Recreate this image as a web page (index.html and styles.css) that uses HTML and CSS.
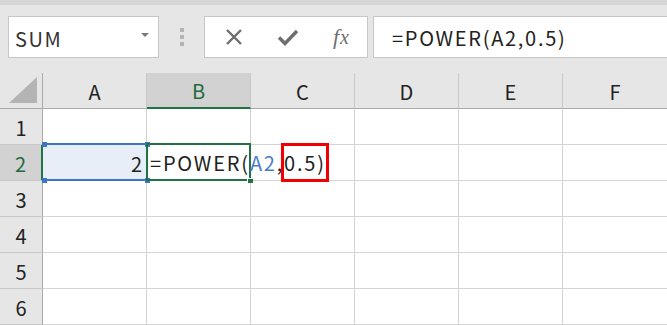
FILE: index.html
```html
<!DOCTYPE html>
<html lang="ja">
<head>
<meta charset="utf-8">
<link rel="stylesheet" href="styles.css">
</head>
<body>
<div class="app">
  <div class="topstrip"></div>
  <div class="toolbar">
    <div class="namebox">
      <span class="name">SUM</span>
      <svg class="caret" width="8" height="5" viewBox="0 0 8 5"><path d="M0 0h8L4 4z" fill="#7a7a7a"/></svg>
    </div>
    <div class="dots"><i></i><i></i><i></i></div>
    <div class="buttons">
      <svg class="ico" width="20" height="20" viewBox="0 0 20 20"><path d="M3 3L17 17M17 3L3 17" stroke="#6e6e6e" stroke-width="2.4" fill="none"/></svg>
      <svg class="ico" width="22" height="20" viewBox="0 0 22 20"><path d="M2 10.5l6 6L20 4" stroke="#6e6e6e" stroke-width="3.4" fill="none"/></svg>
      <span class="fx"><i>f</i><i>x</i></span>
    </div>
    <div class="formula">=POWER(A2,0.5)</div>
  </div>
  <div class="sheet">
    <div class="grid">
      <div class="corner"><svg width="30" height="28" viewBox="0 0 30 28"><path d="M28 0V26H0z" fill="#b4b4b4"/></svg></div>
      <div class="ch">A</div>
      <div class="ch sel">B</div>
      <div class="ch">C</div>
      <div class="ch">D</div>
      <div class="ch">E</div>
      <div class="ch last">F</div>

      <div class="rh">1</div>
      <div class="c"></div><div class="c"></div><div class="c"></div><div class="c"></div><div class="c"></div><div class="c last"></div>

      <div class="rh sel">2</div>
      <div class="c a2">2</div>
      <div class="c b2"></div><div class="c nob"></div><div class="c"></div><div class="c"></div><div class="c last"></div>

      <div class="rh">3</div>
      <div class="c"></div><div class="c"></div><div class="c"></div><div class="c"></div><div class="c"></div><div class="c last"></div>

      <div class="rh">4</div>
      <div class="c"></div><div class="c"></div><div class="c"></div><div class="c"></div><div class="c"></div><div class="c last"></div>

      <div class="rh">5</div>
      <div class="c"></div><div class="c"></div><div class="c"></div><div class="c"></div><div class="c"></div><div class="c last"></div>

      <div class="rh">6</div>
      <div class="c"></div><div class="c"></div><div class="c"></div><div class="c"></div><div class="c"></div><div class="c last"></div>
    </div>

    <div class="refbox">
      <i class="h h1"></i><i class="h h2"></i><i class="h h3"></i><i class="h h4"></i>
    </div>
    <div class="activebox"><i class="fill"></i></div>
    <div class="celltext">=POWER(<span class="ref">A2</span>,0.5)</div>
    <div class="redbox"></div>
  </div>
</div>
</body>
</html>
```

FILE: styles.css
```css
* { box-sizing: border-box; }
html, body { margin: 0; padding: 0; }
body {
  width: 667px;
  height: 325px;
  overflow: hidden;
  background: #e6e6e6;
  font-family: "Noto Sans CJK JP", "Noto Sans", sans-serif;
  color: #222;
}
.app { width: 667px; }
.topstrip { height: 5px; background: #d6d6d6; }
.toolbar {
  height: 68px;
  display: flex;
  align-items: flex-start;
  padding-top: 11px;
  padding-left: 8px;
}
.namebox {
  width: 151px;
  height: 42px;
  background: #fff;
  border: 1px solid #c6c6c6;
  display: flex;
  align-items: center;
  justify-content: space-between;
  padding: 0 9px 0 6px;
}
.name { font-size: 20px; color: #333; letter-spacing: 1.6px; margin-top: 2px; }
.caret { margin-bottom: 3px; }
.dots {
  width: 45px;
  height: 42px;
  display: flex;
  flex-direction: column;
  align-items: center;
  justify-content: center;
  gap: 3px;
}
.dots i { display: block; width: 4px; height: 4px; background: #b4b4b4; }
.buttons {
  width: 164px;
  height: 42px;
  background: #fff;
  border: 1px solid #c6c6c6;
  display: flex;
  align-items: center;
  justify-content: space-between;
  padding: 0 18px 0 19px;
}
.fx {
  font-family: "Liberation Serif", serif;
  font-style: italic;
  font-size: 20px;
  color: #6e6e6e;
  display: flex;
  align-items: baseline;
}
.fx i:first-child { font-size: 22px; margin-right: 1px; }
.formula {
  flex: 1;
  height: 42px;
  margin-left: 5px;
  background: #fff;
  border: 1px solid #c6c6c6;
  border-right: none;
  font-size: 20px;
  color: #222;
  display: flex;
  align-items: center;
  padding-left: 18px;
  padding-top: 1px;
  letter-spacing: 1.7px;
}
.sheet { position: relative; background: #fff; }
.grid {
  display: grid;
  grid-template-columns: 43px repeat(6, 104px);
  grid-template-rows: 36px repeat(6, 36px);
}
.corner {
  background: #e6e6e6;
  border-right: 1px solid #ababab;
  border-bottom: 1px solid #ababab;
  display: flex;
  align-items: flex-end;
  justify-content: flex-end;
  padding: 0 3px 3px 0;
}
.ch {
  background: #e6e6e6;
  border-right: 1px solid #c8c8c8;
  border-bottom: 1px solid #ababab;
  font-size: 20px;
  color: #222;
  display: flex;
  align-items: center;
  justify-content: center;
  padding-top: 1px;
}
.ch.sel { background: #d2d2d2; border-bottom: 2px solid #217346; color: #1e6b3f; }
.ch.last { border-right: none; }
.rh {
  background: #e6e6e6;
  border-right: 1px solid #ababab;
  border-bottom: 1px solid #c8c8c8;
  font-size: 20px;
  color: #222;
  display: flex;
  align-items: center;
  justify-content: center;
  padding-top: 1px;
}
.rh.sel { background: #d2d2d2; border-right: 2px solid #217346; color: #1e6b3f; }
.c {
  border-right: 1px solid #d4d4d4;
  border-bottom: 1px solid #d4d4d4;
  background: #fff;
}
.c.last { border-right: none; }
.c.a2 {
  background: #e8eef8;
  font-size: 20px;
  display: flex;
  align-items: center;
  justify-content: flex-end;
  padding-right: 4px;
  padding-top: 1px;
}
.c.b2 { border-right: none; }
.refbox {
  position: absolute;
  left: 43px;
  top: 70px;
  width: 105px;
  height: 38px;
  border: 2px solid #3c74c8;
  border-left: none;
}
.h { position: absolute; width: 5px; height: 5px; background: #3c74c8; }
.h1 { left: -1px; top: -3px; }
.h2 { right: -4px; top: -3px; }
.h3 { left: -1px; bottom: -4px; }
.h4 { right: -4px; bottom: -4px; }
.activebox {
  position: absolute;
  left: 146px;
  top: 70px;
  width: 105px;
  height: 38px;
  border: 2px solid #217346;
}
.fill {
  position: absolute;
  right: -4px;
  bottom: -4px;
  width: 6px;
  height: 5px;
  background: #217346;
  border-left: 1px solid #fff;
  border-top: 1px solid #fff;
}
.celltext {
  position: absolute;
  left: 150px;
  top: 71px;
  height: 36px;
  display: flex;
  align-items: center;
  font-size: 20px;
  color: #222;
  white-space: nowrap;
  padding-top: 1px;
  letter-spacing: 1.8px;
}
.ref { color: #4a7ccc; }
.redbox {
  position: absolute;
  left: 281px;
  top: 70px;
  width: 48px;
  height: 39px;
  border: 3px solid #f00000;
}
```
